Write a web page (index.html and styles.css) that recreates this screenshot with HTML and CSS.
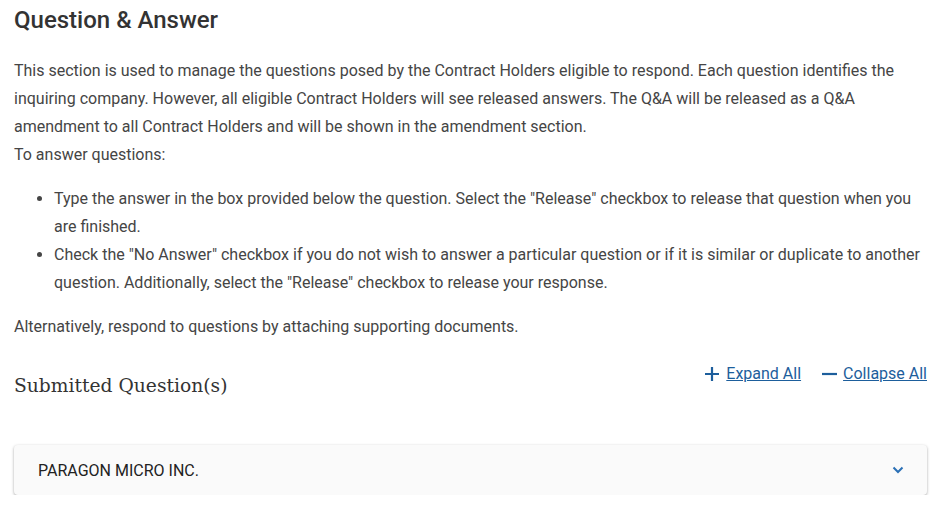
FILE: index.html
```html
<!DOCTYPE html>
<html>
<head>
<meta charset="utf-8">
<link rel="stylesheet" href="styles.css">
</head>
<body>
<main class="page">
  <h1 class="title">Question &amp; Answer</h1>
  <p class="intro">This section is used to manage the questions posed by the Contract Holders eligible to respond. Each question identifies the inquiring company. However, all eligible Contract Holders will see released answers. The Q&amp;A will be released as a Q&amp;A amendment to all Contract Holders and will be shown in the amendment section.<br>To answer questions:</p>
  <ul class="steps">
    <li>Type the answer in the box provided below the question. Select the "Release" checkbox to release that question when you are finished.</li>
    <li>Check the "No Answer" checkbox if you do not wish to answer a particular question or if it is similar or duplicate to another question. Additionally, select the "Release" checkbox to release your response.</li>
  </ul>
  <p class="alt">Alternatively, respond to questions by attaching supporting documents.</p>
  <div class="sub-head">
    <h2 class="sub-title">Submitted Question(s)</h2>
    <div class="actions">
      <a class="action" href="#"><svg class="ico" viewBox="0 0 16 16" width="16" height="16"><path d="M8 1v14M1 8h14" stroke="#1d5e9c" stroke-width="2.2" fill="none"/></svg><span>Expand All</span></a>
      <a class="action" href="#"><svg class="ico" viewBox="0 0 16 16" width="16" height="16"><path d="M1 8h15" stroke="#1d5e9c" stroke-width="2.2" fill="none"/></svg><span>Collapse All</span></a>
    </div>
  </div>
  <div class="card">
    <span class="company">PARAGON MICRO INC.</span>
    <svg class="chev" viewBox="0 0 12 8" width="12" height="8"><path d="M1.5 1.5l4.5 4.5 4.5-4.5" stroke="#2a6fb5" stroke-width="2" fill="none"/></svg>
  </div>
</main>
</body>
</html>
```
FILE: styles.css
```css
html, body { margin: 0; padding: 0; background: #fff; }
body { font-family: Roboto, "Liberation Sans", sans-serif; color: #454545; }
.page { padding: 0 24px 0 14px; }
.title { margin: 0; padding-top: 6px; font-size: 24px; font-weight: 500; line-height: 28px; color: #333; }
.intro { margin: 23px 0 0; font-size: 16px; line-height: 28px; }
.steps { margin: 16px 0 0; padding-left: 40px; font-size: 16px; line-height: 28px; }
.alt { margin: 16px 0 0; font-size: 16px; line-height: 28px; }
.sub-head { display: flex; justify-content: space-between; align-items: flex-start; margin-top: 19px; }
.sub-title { margin: 12px 0 0; font-family: "DejaVu Serif", serif; font-weight: 400; font-size: 18.7px; line-height: 28px; color: #333; }
.actions { display: flex; gap: 20px; }
.action { display: flex; align-items: center; gap: 6px; color: #1d5e9c; font-size: 16px; line-height: 28px; text-decoration: underline; }
.card { margin-top: 45px; height: 50px; background: #fafafa; border-radius: 4px; box-shadow: 0 1px 3px rgba(0,0,0,0.35); display: flex; align-items: center; justify-content: space-between; padding: 0 23px 0 24px; }
.company { font-size: 16px; color: #222; }
.chev { display: block; }
```
